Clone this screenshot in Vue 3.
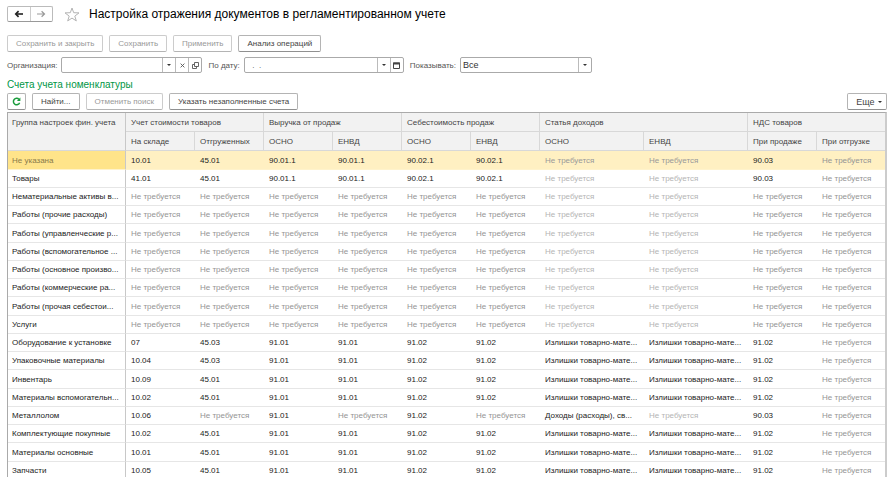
<script setup>
import { ref } from 'vue'

const NO = 'Не требуется'
const SURPLUS = 'Излишки товарно-мате...'
const organization = ref('')
const date = ref('  .  .')
const show = ref('Все')

const groups = [
  { title: 'Учет стоимости товаров', columns: ['На складе', 'Отгруженных'] },
  { title: 'Выручка от продаж', columns: ['ОСНО', 'ЕНВД'] },
  { title: 'Себестоимость продаж', columns: ['ОСНО', 'ЕНВД'] },
  { title: 'Статья доходов', columns: ['ОСНО', 'ЕНВД'] },
  { title: 'НДС товаров', columns: ['При продаже', 'При отгрузке'] },
]

const none = (name) => [name, ...Array(10).fill(NO)]
const stock = (name, account, shipped) => [
  name, account, shipped, '91.01', '91.01', '91.02', '91.02', SURPLUS, SURPLUS, '91.02', NO,
]
const goods = (name, account) => [
  name, account, '45.01', '90.01.1', '90.01.1', '90.02.1', '90.02.1', NO, NO, '90.03', NO,
]

const rows = [
  goods('Не указана', '10.01'),
  goods('Товары', '41.01'),
  none('Нематериальные активы в...'),
  none('Работы (прочие расходы)'),
  none('Работы (управленческие р...'),
  none('Работы (вспомогательное ...'),
  none('Работы (основное произво...'),
  none('Работы (коммерческие ра...'),
  none('Работы (прочая себестои...'),
  none('Услуги'),
  stock('Оборудование к установке', '07', '45.03'),
  stock('Упаковочные материалы', '10.04', '45.03'),
  stock('Инвентарь', '10.09', '45.01'),
  stock('Материалы вспомогательн...', '10.02', '45.01'),
  ['Металлолом', '10.06', NO, '91.01', NO, '91.02', NO, 'Доходы (расходы), св...', NO, '90.03', NO],
  stock('Комплектующие покупные', '10.02', '45.01'),
  stock('Материалы основные', '10.01', '45.01'),
  stock('Запчасти', '10.05', '45.01'),
]
</script>

<template>
  <main class="page">
    <header class="title-bar">
      <div class="history">
        <button type="button" aria-label="Назад">
          <svg width="10" height="8" viewBox="0 0 10 8"><path d="M9 4H2" stroke="#222" stroke-width="1.6" /><path d="M4.600 1.200 1.800 4l2.800 2.800" fill="none" stroke="#222" stroke-width="1.7" /></svg>
        </button>
        <button type="button" aria-label="Вперед">
          <svg width="10" height="8" viewBox="0 0 10 8"><path d="M1 4h7.500M5.600 1.200 8.500 4 5.600 6.800" fill="none" stroke="#999" stroke-width="1.200" /></svg>
        </button>
      </div>
      <button class="star" type="button" aria-label="В избранное">
        <svg width="16" height="15" viewBox="0 0 16 15"><path d="M8 1l1.700 4.700 5.300.2-4.200 3.200 1.500 4.800L8 11.100l-4.300 2.800 1.500-4.800L1 5.900l5.300-.2z" fill="#fff" stroke="#b4b4b4" stroke-width="1" /></svg>
      </button>
      <h1>Настройка отражения документов в регламентированном учете</h1>
    </header>

    <div class="toolbar">
      <button class="btn" type="button" disabled>Сохранить и закрыть</button>
      <button class="btn" type="button" disabled>Сохранить</button>
      <button class="btn" type="button" disabled>Применить</button>
      <button class="btn" type="button">Анализ операций</button>
    </div>

    <div class="filters">
      <label for="organization">Организация:</label>
      <div class="field org">
        <input id="organization" v-model="organization" type="text" />
        <button type="button" aria-label="Выбрать"><i class="caret"></i></button>
        <button type="button" aria-label="Очистить">
          <svg width="5" height="5" viewBox="0 0 5 5"><path d="M.6.6l3.800 3.800M4.400.6.6 4.400" stroke="#555" stroke-width=".9" /></svg>
        </button>
        <button type="button" aria-label="Открыть">
          <svg width="7" height="7" viewBox="0 0 7 7"><path d="M2.500.5h4v4h-4zM2.500 2.500h-2v4h4v-2" fill="none" stroke="#555" stroke-width=".9" /></svg>
        </button>
      </div>
      <label for="date">По дату:</label>
      <div class="field date">
        <input id="date" v-model="date" type="text" />
        <button type="button" aria-label="Выбрать дату"><i class="caret"></i></button>
        <button type="button" aria-label="Календарь">
          <svg width="7" height="7" viewBox="0 0 7 7"><path d="M.5 1h6v5.500h-6z" fill="#fff" stroke="#444" /><path d="M0 .5h7v2H0z" fill="#444" /></svg>
        </button>
      </div>
      <label for="show">Показывать:</label>
      <div class="field show">
        <select id="show" v-model="show">
          <option>Все</option>
        </select>
        <span class="drop"><i class="caret"></i></span>
      </div>
    </div>

    <h2>Счета учета номенклатуры</h2>

    <div class="commands">
      <button class="btn refresh" type="button" aria-label="Обновить">
        <svg width="9" height="9" viewBox="0 0 9 9"><path d="M7 2.400A3.200 3.200 0 1 0 7.600 5.700" fill="none" stroke="#1a9c3c" stroke-width="1.500" /><path d="M8.400.4v3.500H4.900z" fill="#1a9c3c" /></svg>
      </button>
      <button class="btn" type="button">Найти...</button>
      <button class="btn" type="button" disabled>Отменить поиск</button>
      <button class="btn" type="button">Указать незаполненные счета</button>
      <button class="btn more" type="button">Еще <i class="caret"></i></button>
    </div>

    <div class="grid">
      <table>
        <colgroup>
          <col class="c-name" />
          <col v-for="n in 6" :key="n" class="c-account" />
          <col class="c-income" />
          <col class="c-income" />
          <col class="c-account" />
          <col class="c-account" />
        </colgroup>
        <thead>
          <tr>
            <th rowspan="2" scope="col" class="name">Группа настроек фин. учета</th>
            <th v-for="g in groups" :key="g.title" colspan="2" scope="colgroup">{{ g.title }}</th>
          </tr>
          <tr>
            <template v-for="g in groups" :key="g.title">
              <th v-for="c in g.columns" :key="c" scope="col">{{ c }}</th>
            </template>
          </tr>
        </thead>
        <tbody>
          <tr v-for="(row, r) in rows" :key="row[0]" :class="{ selected: r === 0 }">
            <td
              v-for="(cell, c) in row"
              :key="c"
              :class="{ name: c === 0, none: cell === NO, pale: cell === NO && (c === 7 || c === 8) }"
            >{{ cell }}</td>
          </tr>
        </tbody>
      </table>
    </div>
  </main>
</template>

<style>
body {
  margin: 0;
  background: #fff;
}
</style>

<style scoped>
.page {
  display: flex;
  flex-direction: column;
  box-sizing: border-box;
  height: 100vh;
  padding: 6px 5px 0 7px;
  overflow: hidden;
  font-family: "Liberation Sans", Arial, sans-serif;
  font-size: 8px;
  color: #444;
}
button,
input,
select {
  box-sizing: border-box;
  margin: 0;
  padding: 0;
  font: inherit;
  color: inherit;
}
svg {
  display: block;
}
.title-bar {
  display: flex;
  align-items: center;
  height: 16px;
}
.history {
  display: flex;
  box-sizing: border-box;
  width: 46px;
  height: 16px;
  border: 1px solid #bbb;
  border-bottom-color: #999;
  border-radius: 2px;
}
.history button {
  display: flex;
  flex: 1;
  align-items: center;
  justify-content: center;
  border: 0;
  background: none;
}
.history button + button {
  border-left: 1px solid #ccc;
}
.star {
  margin: 0 9px 0 11px;
  border: 0;
  background: none;
}
h1 {
  margin: 0;
  font-size: 12px;
  font-weight: 400;
  line-height: 16px;
  color: #000;
  white-space: nowrap;
}
.toolbar {
  display: flex;
  gap: 6px;
  margin-top: 13px;
}
.btn {
  height: 17px;
  padding: 0 8px;
  border: 1px solid #b4b4b4;
  border-bottom-color: #909090;
  border-radius: 2px;
  background: #fff;
  line-height: 14px;
  white-space: nowrap;
}
.btn:disabled {
  border-color: #ccc;
  border-bottom-color: #b4b4b4;
  color: #999;
}
.filters {
  display: flex;
  align-items: center;
  gap: 4px;
  margin-top: 5px;
  color: #555;
}
.filters label {
  white-space: nowrap;
}
.field {
  display: flex;
  box-sizing: border-box;
  height: 16px;
  margin-right: 2px;
  border: 1px solid #aaa;
  border-radius: 2px;
}
.org {
  width: 141px;
}
.date {
  width: 160px;
}
.show {
  width: 132px;
}
.field input,
.field select {
  flex: 1;
  min-width: 0;
  padding: 0 3px;
  border: 0;
  outline: 0;
  background: none;
}
.field select {
  appearance: none;
  padding: 0 2px;
  font-size: 9px;
  color: #333;
}
.field button,
.drop {
  display: flex;
  flex: none;
  align-items: center;
  justify-content: center;
  box-sizing: border-box;
  width: 13px;
  border: 0;
  border-left: 1px solid #bbb;
  background: none;
}
.caret {
  display: inline-block;
  border: 2px solid transparent;
  border-top-color: #333;
  border-bottom: 0;
}
h2 {
  margin: 6px 0 2px;
  font-size: 10px;
  font-weight: 400;
  line-height: 12px;
  color: #009646;
}
.commands {
  display: flex;
  gap: 6px;
}
.refresh {
  padding: 0 4px;
}
.more {
  margin-left: auto;
  padding: 0 4px 0 8px;
  font-size: 9px;
}
.more .caret {
  margin-left: 1px;
  vertical-align: 2px;
}
.grid {
  flex: 1;
  min-height: 0;
  margin-top: 2px;
  overflow: hidden;
  border: 1px solid #aaa;
  border-right: 2px solid #ccc;
  border-bottom: 0;
}
table {
  width: 100%;
  table-layout: fixed;
  border-spacing: 0;
}
.c-name {
  width: 118px;
}
.c-account {
  width: 69px;
}
.c-income {
  width: 104px;
}
th,
td {
  box-sizing: border-box;
  padding: 0 5px;
  overflow: hidden;
  font-weight: 400;
  text-align: left;
  text-overflow: ellipsis;
  white-space: nowrap;
}
th {
  height: 19px;
  border-right: 1px solid #d8d8d8;
  border-bottom: 1px solid #d8d8d8;
  background: #f2f2f2;
  color: #444;
}
td {
  height: 18px;
  border-bottom: 1px solid #e6e6e6;
  color: #222;
}
tbody tr:nth-child(4n + 1) td {
  height: 19px;
}
.name {
  padding: 0 4px;
  border-right: 1px solid #c8c8c8;
}
th.name {
  padding-top: 5px;
  vertical-align: top;
}
td.none {
  color: #949494;
}
td.pale {
  color: #b4b4b4;
}
.selected td {
  border-bottom-color: #fff3cc;
  background: #fff0c2;
}
.selected td.name {
  background: #ffe48a;
  color: #8a7a4a;
}
.selected td.pale {
  color: #999;
}
</style>
